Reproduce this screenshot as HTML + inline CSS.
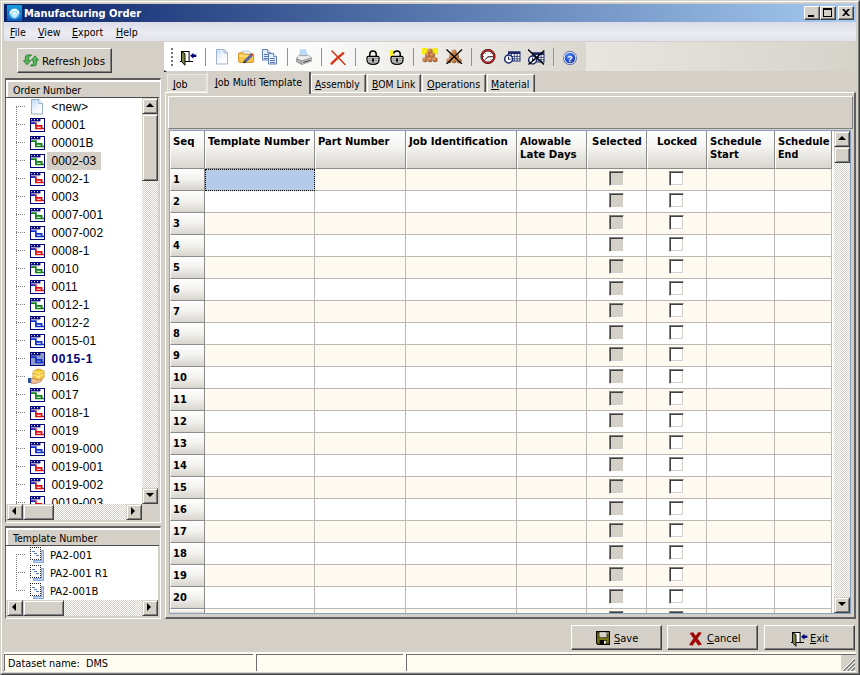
<!DOCTYPE html>
<html><head><meta charset="utf-8"><title>Manufacturing Order</title>
<style>
*{box-sizing:border-box;margin:0;padding:0}
html,body{width:860px;height:675px;overflow:hidden;background:#d4d0c8}
body{position:relative;font-family:"DejaVu Sans Condensed","Liberation Sans",sans-serif;font-size:11px;color:#000}
.a{position:absolute}
.t{position:absolute;white-space:nowrap;line-height:14px;transform-origin:0 0;transform:scaleX(.96)}
.tb{position:absolute;white-space:nowrap;line-height:14px;font-weight:bold}
.tr{position:absolute;white-space:nowrap;line-height:16px;letter-spacing:.12px;font-family:"Liberation Sans",sans-serif;font-size:12px;transform-origin:0 50%;transform:scale(1,1.12)}
u{text-decoration:underline;text-underline-offset:.5px;text-decoration-skip-ink:none;text-decoration-thickness:1px}
#title{left:4px;top:4px;width:852px;height:18px;background:linear-gradient(90deg,#0a246a 0%,#a6caf0 100%)}
#menu{left:4px;top:22px;width:852px;height:19px;background:linear-gradient(180deg,#dcdce9 0%,#ebebf3 55%,#e2e2ec 100%)}
.btn{position:absolute;background:#d4d0c8;border-style:solid;border-width:1px;border-color:#fff #404040 #404040 #fff;box-shadow:inset -1px -1px 0 #808080}
.cap{position:absolute;background:#d4d0c8;border-style:solid;border-width:1px;border-color:#fff #404040 #404040 #fff;box-shadow:inset -1px -1px 0 #808080;top:6px;width:16px;height:14px}
.sb{position:absolute;background:#d4d0c8;border-style:solid;border-width:1px;border-color:#d4d0c8 #404040 #404040 #d4d0c8;box-shadow:inset 1px 1px 0 #fff, inset -1px -1px 0 #808080}
.track{position:absolute;background-color:#fff;background-image:conic-gradient(#d4d0c8 25%,#fff 0 50%,#d4d0c8 0 75%,#fff 0);background-size:2px 2px}
.hd{position:absolute;top:131px;height:38px;background:linear-gradient(180deg,#ffffff 0%,#f4f3f0 45%,#d8d5ce 100%);border-right:1px solid #8c8c8c;border-bottom:1px solid #8c8c8c;border-left:1px solid #fff}
.sq{position:absolute;left:170px;width:35px;height:22px;background:linear-gradient(180deg,#ffffff 0%,#f2f1ed 50%,#d8d5ce 100%);border-right:1px solid #8c8c8c;border-bottom:1px solid #8c8c8c;border-left:1px solid #fff}
.row{position:absolute;left:205px;width:627px;height:22px;border-bottom:1px solid #bcb8b4}
.vl{position:absolute;top:169px;width:1px;height:444px;background:#bcb8b4}
.cb{position:absolute;width:15px;height:15px;border-style:solid;border-width:1px;border-color:#808080 #fff #fff #808080;box-shadow:inset 1px 1px 0 #404040, inset -1px -1px 0 #d4d0c8}
.sp{position:absolute;background:#fffcf0;border-style:solid;border-width:1px;border-color:#808080 #fff #fff #808080;top:654px;height:18px}
.sep{position:absolute;top:48px;width:1px;height:18px;background:#9090a0}
</style></head><body>
<div class="a" style="left:0;top:0;width:860px;height:675px;border-style:solid;border-width:1px;border-color:#d4d0c8 #404040 #404040 #d4d0c8"></div>
<div class="a" style="left:1px;top:1px;width:858px;height:673px;border-style:solid;border-width:1px;border-color:#fff #808080 #808080 #fff"></div>
<div class="a" id="title"></div>
<svg class="a" style="left:7px;top:5px" width="15" height="16" viewBox="0 0 15 16"><defs><linearGradient id="ti" x1="0" y1="0" x2="0" y2="1"><stop offset="0" stop-color="#189ad8"/><stop offset=".5" stop-color="#1a86d6"/><stop offset="1" stop-color="#0e54b4"/></linearGradient><radialGradient id="tg" cx=".5" cy=".5" r=".5"><stop offset="0" stop-color="#e4faff"/><stop offset=".6" stop-color="#8adcfa" stop-opacity=".9"/><stop offset="1" stop-color="#2aa0e6" stop-opacity="0"/></radialGradient></defs><rect width="15" height="16" fill="url(#ti)"/><path d="M1 6 L7.5 15 L14 6" fill="none" stroke="#0c4a9c" stroke-width="1.2" opacity=".55"/><circle cx="7.5" cy="8.8" r="6.4" fill="url(#tg)"/><path d="M3.4 8.8 A4.1 4.1 0 0 1 11.6 8.8" fill="none" stroke="#fff" stroke-width="1.7"/><path d="M4.4 9.4 H10.6 L7.5 13.6 Z" fill="#c4eeff"/><path d="M5.6 9.6 A1.9 1.9 0 0 1 9.4 9.6" fill="none" stroke="#fff" stroke-width=".9"/></svg>
<div class="tb" style="left:24px;top:7px;color:#fff">Manufacturing Order</div>
<div class="cap" style="left:804px"><div class="a" style="left:3px;top:8px;width:6px;height:2px;background:#000"></div></div>
<div class="cap" style="left:820px"><div class="a" style="left:2px;top:1px;width:9px;height:9px;border:1px solid #000;border-top-width:2px"></div></div>
<div class="cap" style="left:838px"><svg class="a" style="left:3px;top:2px" width="8" height="7" viewBox="0 0 8 7"><path d="M0 0h2l2 2 2-2h2l-3 3.5 3 3.5h-2l-2-2-2 2h-2l3-3.5z" fill="#000"/></svg></div>
<div class="a" id="menu"></div>
<div class="t" style="left:10px;top:26px"><u>F</u>ile</div>
<div class="t" style="left:38px;top:26px"><u>V</u>iew</div>
<div class="t" style="left:71.5px;top:26px"><u>E</u>xport</div>
<div class="t" style="left:115.5px;top:26px"><u>H</u>elp</div>
<div class="btn" style="left:17px;top:48px;width:95px;height:25px"></div>
<svg class="a" style="left:23px;top:54px" width="16" height="13" viewBox="0 0 16 13"><g fill="#52b856" stroke="#1f7a2c" stroke-width=".8" stroke-linejoin="round"><path d="M4 10.8 L.4 6.6 H2.4 V3.2 Q2.4 .9 5 .9 H8.6 L7.8 2 H6.6 Q5.7 2 5.7 3.2 V6.6 H7.7 Z"/><path d="M12 1.8 L15.6 6.2 H13.6 V9.6 Q13.6 11.9 11 11.9 H7.4 L8.2 10.8 H9.4 Q10.3 10.8 10.3 9.6 V6.2 H8.3 Z"/></g></svg>
<div class="t" style="left:42.3px;top:55px;transform:scaleX(1.035)">Refresh Jobs</div>
<div class="a" style="left:5px;top:78px;width:156px;height:445px;border-style:solid;border-width:2px 1px 1px 1px;border-color:#5e5e5e #fff #fff #5e5e5e"></div>
<div class="a" style="left:6px;top:80px;width:154px;height:2px;background:#fff"></div>
<div class="a" style="left:6px;top:80px;width:2px;height:17px;background:#fff"></div>
<div class="t" style="left:12.8px;top:84px">Order Number</div>
<div class="a" style="left:6px;top:96.5px;width:153px;height:1.5px;background:#4a4a4a"></div>
<div class="a" style="left:6px;top:98px;width:136px;height:406px;background:#fff;overflow:hidden" id="tree">
<div class="a" style="left:10px;top:9px;width:1px;height:400px;background-image:linear-gradient(#808080 50%,transparent 0);background-size:1px 2px"></div>
<div class="a" style="left:0;top:0px;width:136px;height:18px">
<div class="a" style="left:10px;top:8px;width:10px;height:1px;background-image:linear-gradient(90deg,#808080 50%,transparent 0);background-size:2px 1px"></div>
<svg class="a" style="left:25px;top:1px" width="12" height="15.5" viewBox="0 0 13 16" preserveAspectRatio="none"><defs><linearGradient id="pg" x1="0" y1="0" x2=".6" y2="1"><stop offset="0" stop-color="#b8d8f8"/><stop offset=".6" stop-color="#eef5fd"/><stop offset="1" stop-color="#fff"/></linearGradient></defs><path d="M.5 .5 H8.5 L12.5 4.5 V15.5 H.5 Z" fill="url(#pg)" stroke="#8fa6c4"/><path d="M8.5 .5 V4.5 H12.5" fill="#fff" stroke="#8fa6c4"/></svg>
<div class="tr" style="left:45.5px;top:1px;">&lt;new&gt;</div>
</div>
<div class="a" style="left:0;top:18px;width:136px;height:18px">
<div class="a" style="left:10px;top:8px;width:10px;height:1px;background-image:linear-gradient(90deg,#808080 50%,transparent 0);background-size:2px 1px"></div>
<svg class="a" style="left:24px;top:2px" width="15" height="14" viewBox="0 0 15 14"><rect x=".5" y=".5" width="14" height="13" fill="#fff" stroke="#00007a"/><rect x="1" y="1" width="9.4" height="2.4" fill="#00007a"/><rect x="1.1" y="1.1" width="1.1" height="1.1" fill="#fff"/><rect x="4" y="1.1" width="1.1" height="1.1" fill="#fff"/><rect x="7" y="1.1" width="1.1" height="1.1" fill="#fff"/><path d="M1 5.2 H5.9 V10.5 H14 M5.9 7.8 H11.6 V10.5" fill="none" stroke="#e01010" stroke-width="1.7"/><path d="M1 5.2 H5" fill="none" stroke="#1030d0" stroke-width="1.7"/></svg>
<div class="tr" style="left:45.5px;top:1px;">00001</div>
</div>
<div class="a" style="left:0;top:36px;width:136px;height:18px">
<div class="a" style="left:10px;top:8px;width:10px;height:1px;background-image:linear-gradient(90deg,#808080 50%,transparent 0);background-size:2px 1px"></div>
<svg class="a" style="left:24px;top:2px" width="15" height="14" viewBox="0 0 15 14"><rect x=".5" y=".5" width="14" height="13" fill="#fff" stroke="#00007a"/><rect x="1" y="1" width="9.4" height="2.4" fill="#00007a"/><rect x="1.1" y="1.1" width="1.1" height="1.1" fill="#fff"/><rect x="4" y="1.1" width="1.1" height="1.1" fill="#fff"/><rect x="7" y="1.1" width="1.1" height="1.1" fill="#fff"/><path d="M1 5.2 H5.9 V10.5 H14 M5.9 7.8 H11.6 V10.5" fill="none" stroke="#108018" stroke-width="1.7"/></svg>
<div class="tr" style="left:45.5px;top:1px;">00001B</div>
</div>
<div class="a" style="left:0;top:54px;width:136px;height:18px">
<div class="a" style="left:10px;top:8px;width:10px;height:1px;background-image:linear-gradient(90deg,#808080 50%,transparent 0);background-size:2px 1px"></div>
<svg class="a" style="left:24px;top:2px" width="15" height="14" viewBox="0 0 15 14"><rect x=".5" y=".5" width="14" height="13" fill="#fff" stroke="#00007a"/><rect x="1" y="1" width="9.4" height="2.4" fill="#00007a"/><rect x="1.1" y="1.1" width="1.1" height="1.1" fill="#fff"/><rect x="4" y="1.1" width="1.1" height="1.1" fill="#fff"/><rect x="7" y="1.1" width="1.1" height="1.1" fill="#fff"/><path d="M1 5.2 H5.9 V10.5 H14 M5.9 7.8 H11.6 V10.5" fill="none" stroke="#108018" stroke-width="1.7"/></svg>
<div class="a" style="left:41px;top:0;width:54px;height:18px;background:#d4d0c8"></div>
<div class="tr" style="left:45.5px;top:1px;">0002-03</div>
</div>
<div class="a" style="left:0;top:72px;width:136px;height:18px">
<div class="a" style="left:10px;top:8px;width:10px;height:1px;background-image:linear-gradient(90deg,#808080 50%,transparent 0);background-size:2px 1px"></div>
<svg class="a" style="left:24px;top:2px" width="15" height="14" viewBox="0 0 15 14"><rect x=".5" y=".5" width="14" height="13" fill="#fff" stroke="#00007a"/><rect x="1" y="1" width="9.4" height="2.4" fill="#00007a"/><rect x="1.1" y="1.1" width="1.1" height="1.1" fill="#fff"/><rect x="4" y="1.1" width="1.1" height="1.1" fill="#fff"/><rect x="7" y="1.1" width="1.1" height="1.1" fill="#fff"/><path d="M1 5.2 H5.9 V10.5 H14 M5.9 7.8 H11.6 V10.5" fill="none" stroke="#e01010" stroke-width="1.7"/><path d="M1 5.2 H5" fill="none" stroke="#1030d0" stroke-width="1.7"/></svg>
<div class="tr" style="left:45.5px;top:1px;">0002-1</div>
</div>
<div class="a" style="left:0;top:90px;width:136px;height:18px">
<div class="a" style="left:10px;top:8px;width:10px;height:1px;background-image:linear-gradient(90deg,#808080 50%,transparent 0);background-size:2px 1px"></div>
<svg class="a" style="left:24px;top:2px" width="15" height="14" viewBox="0 0 15 14"><rect x=".5" y=".5" width="14" height="13" fill="#fff" stroke="#00007a"/><rect x="1" y="1" width="9.4" height="2.4" fill="#00007a"/><rect x="1.1" y="1.1" width="1.1" height="1.1" fill="#fff"/><rect x="4" y="1.1" width="1.1" height="1.1" fill="#fff"/><rect x="7" y="1.1" width="1.1" height="1.1" fill="#fff"/><path d="M1 5.2 H5.9 V10.5 H14 M5.9 7.8 H11.6 V10.5" fill="none" stroke="#e01010" stroke-width="1.7"/><path d="M1 5.2 H5" fill="none" stroke="#1030d0" stroke-width="1.7"/></svg>
<div class="tr" style="left:45.5px;top:1px;">0003</div>
</div>
<div class="a" style="left:0;top:108px;width:136px;height:18px">
<div class="a" style="left:10px;top:8px;width:10px;height:1px;background-image:linear-gradient(90deg,#808080 50%,transparent 0);background-size:2px 1px"></div>
<svg class="a" style="left:24px;top:2px" width="15" height="14" viewBox="0 0 15 14"><rect x=".5" y=".5" width="14" height="13" fill="#fff" stroke="#00007a"/><rect x="1" y="1" width="9.4" height="2.4" fill="#00007a"/><rect x="1.1" y="1.1" width="1.1" height="1.1" fill="#fff"/><rect x="4" y="1.1" width="1.1" height="1.1" fill="#fff"/><rect x="7" y="1.1" width="1.1" height="1.1" fill="#fff"/><path d="M1 5.2 H5.9 V10.5 H14 M5.9 7.8 H11.6 V10.5" fill="none" stroke="#108018" stroke-width="1.7"/></svg>
<div class="tr" style="left:45.5px;top:1px;">0007-001</div>
</div>
<div class="a" style="left:0;top:126px;width:136px;height:18px">
<div class="a" style="left:10px;top:8px;width:10px;height:1px;background-image:linear-gradient(90deg,#808080 50%,transparent 0);background-size:2px 1px"></div>
<svg class="a" style="left:24px;top:2px" width="15" height="14" viewBox="0 0 15 14"><rect x=".5" y=".5" width="14" height="13" fill="#fff" stroke="#00007a"/><rect x="1" y="1" width="9.4" height="2.4" fill="#00007a"/><rect x="1.1" y="1.1" width="1.1" height="1.1" fill="#fff"/><rect x="4" y="1.1" width="1.1" height="1.1" fill="#fff"/><rect x="7" y="1.1" width="1.1" height="1.1" fill="#fff"/><path d="M1 5.2 H5.9 V10.5 H14 M5.9 7.8 H11.6 V10.5" fill="none" stroke="#1030d0" stroke-width="1.7"/></svg>
<div class="tr" style="left:45.5px;top:1px;">0007-002</div>
</div>
<div class="a" style="left:0;top:144px;width:136px;height:18px">
<div class="a" style="left:10px;top:8px;width:10px;height:1px;background-image:linear-gradient(90deg,#808080 50%,transparent 0);background-size:2px 1px"></div>
<svg class="a" style="left:24px;top:2px" width="15" height="14" viewBox="0 0 15 14"><rect x=".5" y=".5" width="14" height="13" fill="#fff" stroke="#00007a"/><rect x="1" y="1" width="9.4" height="2.4" fill="#00007a"/><rect x="1.1" y="1.1" width="1.1" height="1.1" fill="#fff"/><rect x="4" y="1.1" width="1.1" height="1.1" fill="#fff"/><rect x="7" y="1.1" width="1.1" height="1.1" fill="#fff"/><path d="M1 5.2 H5.9 V10.5 H14 M5.9 7.8 H11.6 V10.5" fill="none" stroke="#e01010" stroke-width="1.7"/><path d="M1 5.2 H5" fill="none" stroke="#1030d0" stroke-width="1.7"/></svg>
<div class="tr" style="left:45.5px;top:1px;">0008-1</div>
</div>
<div class="a" style="left:0;top:162px;width:136px;height:18px">
<div class="a" style="left:10px;top:8px;width:10px;height:1px;background-image:linear-gradient(90deg,#808080 50%,transparent 0);background-size:2px 1px"></div>
<svg class="a" style="left:24px;top:2px" width="15" height="14" viewBox="0 0 15 14"><rect x=".5" y=".5" width="14" height="13" fill="#fff" stroke="#00007a"/><rect x="1" y="1" width="9.4" height="2.4" fill="#00007a"/><rect x="1.1" y="1.1" width="1.1" height="1.1" fill="#fff"/><rect x="4" y="1.1" width="1.1" height="1.1" fill="#fff"/><rect x="7" y="1.1" width="1.1" height="1.1" fill="#fff"/><path d="M1 5.2 H5.9 V10.5 H14 M5.9 7.8 H11.6 V10.5" fill="none" stroke="#108018" stroke-width="1.7"/></svg>
<div class="tr" style="left:45.5px;top:1px;">0010</div>
</div>
<div class="a" style="left:0;top:180px;width:136px;height:18px">
<div class="a" style="left:10px;top:8px;width:10px;height:1px;background-image:linear-gradient(90deg,#808080 50%,transparent 0);background-size:2px 1px"></div>
<svg class="a" style="left:24px;top:2px" width="15" height="14" viewBox="0 0 15 14"><rect x=".5" y=".5" width="14" height="13" fill="#fff" stroke="#00007a"/><rect x="1" y="1" width="9.4" height="2.4" fill="#00007a"/><rect x="1.1" y="1.1" width="1.1" height="1.1" fill="#fff"/><rect x="4" y="1.1" width="1.1" height="1.1" fill="#fff"/><rect x="7" y="1.1" width="1.1" height="1.1" fill="#fff"/><path d="M1 5.2 H5.9 V10.5 H14 M5.9 7.8 H11.6 V10.5" fill="none" stroke="#e01010" stroke-width="1.7"/><path d="M1 5.2 H5" fill="none" stroke="#1030d0" stroke-width="1.7"/></svg>
<div class="tr" style="left:45.5px;top:1px;">0011</div>
</div>
<div class="a" style="left:0;top:198px;width:136px;height:18px">
<div class="a" style="left:10px;top:8px;width:10px;height:1px;background-image:linear-gradient(90deg,#808080 50%,transparent 0);background-size:2px 1px"></div>
<svg class="a" style="left:24px;top:2px" width="15" height="14" viewBox="0 0 15 14"><rect x=".5" y=".5" width="14" height="13" fill="#fff" stroke="#00007a"/><rect x="1" y="1" width="9.4" height="2.4" fill="#00007a"/><rect x="1.1" y="1.1" width="1.1" height="1.1" fill="#fff"/><rect x="4" y="1.1" width="1.1" height="1.1" fill="#fff"/><rect x="7" y="1.1" width="1.1" height="1.1" fill="#fff"/><path d="M1 5.2 H5.9 V10.5 H14 M5.9 7.8 H11.6 V10.5" fill="none" stroke="#108018" stroke-width="1.7"/></svg>
<div class="tr" style="left:45.5px;top:1px;">0012-1</div>
</div>
<div class="a" style="left:0;top:216px;width:136px;height:18px">
<div class="a" style="left:10px;top:8px;width:10px;height:1px;background-image:linear-gradient(90deg,#808080 50%,transparent 0);background-size:2px 1px"></div>
<svg class="a" style="left:24px;top:2px" width="15" height="14" viewBox="0 0 15 14"><rect x=".5" y=".5" width="14" height="13" fill="#fff" stroke="#00007a"/><rect x="1" y="1" width="9.4" height="2.4" fill="#00007a"/><rect x="1.1" y="1.1" width="1.1" height="1.1" fill="#fff"/><rect x="4" y="1.1" width="1.1" height="1.1" fill="#fff"/><rect x="7" y="1.1" width="1.1" height="1.1" fill="#fff"/><path d="M1 5.2 H5.9 V10.5 H14 M5.9 7.8 H11.6 V10.5" fill="none" stroke="#1030d0" stroke-width="1.7"/></svg>
<div class="tr" style="left:45.5px;top:1px;">0012-2</div>
</div>
<div class="a" style="left:0;top:234px;width:136px;height:18px">
<div class="a" style="left:10px;top:8px;width:10px;height:1px;background-image:linear-gradient(90deg,#808080 50%,transparent 0);background-size:2px 1px"></div>
<svg class="a" style="left:24px;top:2px" width="15" height="14" viewBox="0 0 15 14"><rect x=".5" y=".5" width="14" height="13" fill="#fff" stroke="#00007a"/><rect x="1" y="1" width="9.4" height="2.4" fill="#00007a"/><rect x="1.1" y="1.1" width="1.1" height="1.1" fill="#fff"/><rect x="4" y="1.1" width="1.1" height="1.1" fill="#fff"/><rect x="7" y="1.1" width="1.1" height="1.1" fill="#fff"/><path d="M1 5.2 H5.9 V10.5 H14 M5.9 7.8 H11.6 V10.5" fill="none" stroke="#1030d0" stroke-width="1.7"/></svg>
<div class="tr" style="left:45.5px;top:1px;">0015-01</div>
</div>
<div class="a" style="left:0;top:252px;width:136px;height:18px">
<div class="a" style="left:10px;top:8px;width:10px;height:1px;background-image:linear-gradient(90deg,#808080 50%,transparent 0);background-size:2px 1px"></div>
<svg class="a" style="left:24px;top:2px" width="15" height="14" viewBox="0 0 15 14"><rect x=".5" y=".5" width="14" height="13" fill="#8f9ec8" stroke="#00007a"/><rect x="1" y="1" width="9.4" height="2.4" fill="#00007a"/><rect x="1.1" y="1.1" width="1.1" height="1.1" fill="#fff"/><rect x="4" y="1.1" width="1.1" height="1.1" fill="#fff"/><rect x="7" y="1.1" width="1.1" height="1.1" fill="#fff"/><path d="M1 5.2 H5.9 V10.5 H14 M5.9 7.8 H11.6 V10.5" fill="none" stroke="#1030d0" stroke-width="1.7"/></svg>
<div class="tr" style="left:45.5px;top:1px;font-weight:bold;color:#00007a;letter-spacing:.7px;">0015-1</div>
</div>
<div class="a" style="left:0;top:270px;width:136px;height:18px">
<div class="a" style="left:10px;top:8px;width:10px;height:1px;background-image:linear-gradient(90deg,#808080 50%,transparent 0);background-size:2px 1px"></div>
<svg class="a" style="left:22px;top:0" width="18" height="17" viewBox="0 0 18 17"><path d="M5 3.5 L10 1 L16 2.8 V9.5 L11 12.5 L5 10.5 Z" fill="#f6c83a" stroke="#c08a10" stroke-width=".8"/><path d="M5 3.5 L11 5.3 L16 2.8 M11 5.3 V12.5 M5 7 L11 8.9 L16 6.2" fill="none" stroke="#fff0a0" stroke-width=".9"/><path d="M0 10 H3 V15 H0 Z" fill="#1c4fa8"/><path d="M3 10.6 Q7 9.8 9 12 L13.5 11.4 Q14.6 12.2 13.4 13.2 L8.5 15.3 H3 Z" fill="#f2c49a" stroke="#b0703c" stroke-width=".7"/></svg>
<div class="tr" style="left:45.5px;top:1px;">0016</div>
</div>
<div class="a" style="left:0;top:288px;width:136px;height:18px">
<div class="a" style="left:10px;top:8px;width:10px;height:1px;background-image:linear-gradient(90deg,#808080 50%,transparent 0);background-size:2px 1px"></div>
<svg class="a" style="left:24px;top:2px" width="15" height="14" viewBox="0 0 15 14"><rect x=".5" y=".5" width="14" height="13" fill="#fff" stroke="#00007a"/><rect x="1" y="1" width="9.4" height="2.4" fill="#00007a"/><rect x="1.1" y="1.1" width="1.1" height="1.1" fill="#fff"/><rect x="4" y="1.1" width="1.1" height="1.1" fill="#fff"/><rect x="7" y="1.1" width="1.1" height="1.1" fill="#fff"/><path d="M1 5.2 H5.9 V10.5 H14 M5.9 7.8 H11.6 V10.5" fill="none" stroke="#108018" stroke-width="1.7"/></svg>
<div class="tr" style="left:45.5px;top:1px;">0017</div>
</div>
<div class="a" style="left:0;top:306px;width:136px;height:18px">
<div class="a" style="left:10px;top:8px;width:10px;height:1px;background-image:linear-gradient(90deg,#808080 50%,transparent 0);background-size:2px 1px"></div>
<svg class="a" style="left:24px;top:2px" width="15" height="14" viewBox="0 0 15 14"><rect x=".5" y=".5" width="14" height="13" fill="#fff" stroke="#00007a"/><rect x="1" y="1" width="9.4" height="2.4" fill="#00007a"/><rect x="1.1" y="1.1" width="1.1" height="1.1" fill="#fff"/><rect x="4" y="1.1" width="1.1" height="1.1" fill="#fff"/><rect x="7" y="1.1" width="1.1" height="1.1" fill="#fff"/><path d="M1 5.2 H5.9 V10.5 H14 M5.9 7.8 H11.6 V10.5" fill="none" stroke="#e01010" stroke-width="1.7"/><path d="M1 5.2 H5" fill="none" stroke="#1030d0" stroke-width="1.7"/></svg>
<div class="tr" style="left:45.5px;top:1px;">0018-1</div>
</div>
<div class="a" style="left:0;top:324px;width:136px;height:18px">
<div class="a" style="left:10px;top:8px;width:10px;height:1px;background-image:linear-gradient(90deg,#808080 50%,transparent 0);background-size:2px 1px"></div>
<svg class="a" style="left:24px;top:2px" width="15" height="14" viewBox="0 0 15 14"><rect x=".5" y=".5" width="14" height="13" fill="#fff" stroke="#00007a"/><rect x="1" y="1" width="9.4" height="2.4" fill="#00007a"/><rect x="1.1" y="1.1" width="1.1" height="1.1" fill="#fff"/><rect x="4" y="1.1" width="1.1" height="1.1" fill="#fff"/><rect x="7" y="1.1" width="1.1" height="1.1" fill="#fff"/><path d="M1 5.2 H5.9 V10.5 H14 M5.9 7.8 H11.6 V10.5" fill="none" stroke="#e01010" stroke-width="1.7"/><path d="M1 5.2 H5" fill="none" stroke="#1030d0" stroke-width="1.7"/></svg>
<div class="tr" style="left:45.5px;top:1px;">0019</div>
</div>
<div class="a" style="left:0;top:342px;width:136px;height:18px">
<div class="a" style="left:10px;top:8px;width:10px;height:1px;background-image:linear-gradient(90deg,#808080 50%,transparent 0);background-size:2px 1px"></div>
<svg class="a" style="left:24px;top:2px" width="15" height="14" viewBox="0 0 15 14"><rect x=".5" y=".5" width="14" height="13" fill="#fff" stroke="#00007a"/><rect x="1" y="1" width="9.4" height="2.4" fill="#00007a"/><rect x="1.1" y="1.1" width="1.1" height="1.1" fill="#fff"/><rect x="4" y="1.1" width="1.1" height="1.1" fill="#fff"/><rect x="7" y="1.1" width="1.1" height="1.1" fill="#fff"/><path d="M1 5.2 H5.9 V10.5 H14 M5.9 7.8 H11.6 V10.5" fill="none" stroke="#1030d0" stroke-width="1.7"/></svg>
<div class="tr" style="left:45.5px;top:1px;">0019-000</div>
</div>
<div class="a" style="left:0;top:360px;width:136px;height:18px">
<div class="a" style="left:10px;top:8px;width:10px;height:1px;background-image:linear-gradient(90deg,#808080 50%,transparent 0);background-size:2px 1px"></div>
<svg class="a" style="left:24px;top:2px" width="15" height="14" viewBox="0 0 15 14"><rect x=".5" y=".5" width="14" height="13" fill="#fff" stroke="#00007a"/><rect x="1" y="1" width="9.4" height="2.4" fill="#00007a"/><rect x="1.1" y="1.1" width="1.1" height="1.1" fill="#fff"/><rect x="4" y="1.1" width="1.1" height="1.1" fill="#fff"/><rect x="7" y="1.1" width="1.1" height="1.1" fill="#fff"/><path d="M1 5.2 H5.9 V10.5 H14 M5.9 7.8 H11.6 V10.5" fill="none" stroke="#e01010" stroke-width="1.7"/><path d="M1 5.2 H5" fill="none" stroke="#1030d0" stroke-width="1.7"/></svg>
<div class="tr" style="left:45.5px;top:1px;">0019-001</div>
</div>
<div class="a" style="left:0;top:378px;width:136px;height:18px">
<div class="a" style="left:10px;top:8px;width:10px;height:1px;background-image:linear-gradient(90deg,#808080 50%,transparent 0);background-size:2px 1px"></div>
<svg class="a" style="left:24px;top:2px" width="15" height="14" viewBox="0 0 15 14"><rect x=".5" y=".5" width="14" height="13" fill="#fff" stroke="#00007a"/><rect x="1" y="1" width="9.4" height="2.4" fill="#00007a"/><rect x="1.1" y="1.1" width="1.1" height="1.1" fill="#fff"/><rect x="4" y="1.1" width="1.1" height="1.1" fill="#fff"/><rect x="7" y="1.1" width="1.1" height="1.1" fill="#fff"/><path d="M1 5.2 H5.9 V10.5 H14 M5.9 7.8 H11.6 V10.5" fill="none" stroke="#e01010" stroke-width="1.7"/><path d="M1 5.2 H5" fill="none" stroke="#1030d0" stroke-width="1.7"/></svg>
<div class="tr" style="left:45.5px;top:1px;">0019-002</div>
</div>
<div class="a" style="left:0;top:396px;width:136px;height:18px">
<div class="a" style="left:10px;top:8px;width:10px;height:1px;background-image:linear-gradient(90deg,#808080 50%,transparent 0);background-size:2px 1px"></div>
<svg class="a" style="left:24px;top:2px" width="15" height="14" viewBox="0 0 15 14"><rect x=".5" y=".5" width="14" height="13" fill="#fff" stroke="#00007a"/><rect x="1" y="1" width="9.4" height="2.4" fill="#00007a"/><rect x="1.1" y="1.1" width="1.1" height="1.1" fill="#fff"/><rect x="4" y="1.1" width="1.1" height="1.1" fill="#fff"/><rect x="7" y="1.1" width="1.1" height="1.1" fill="#fff"/><path d="M1 5.2 H5.9 V10.5 H14 M5.9 7.8 H11.6 V10.5" fill="none" stroke="#e01010" stroke-width="1.7"/><path d="M1 5.2 H5" fill="none" stroke="#1030d0" stroke-width="1.7"/></svg>
<div class="tr" style="left:45.5px;top:1px;">0019-003</div>
</div>
</div>
<div class="track" style="left:142px;top:98px;width:16px;height:406px"></div>
<div class="sb" style="left:142px;top:98px;width:16px;height:16px"><svg class="a" style="left:3px;top:4px;width:8px;height:4px" viewBox="0 0 8 4"><path d="M0 4 L4 0 L8 4 Z" fill="#000"/></svg></div>
<div class="sb" style="left:142px;top:488px;width:16px;height:16px"><svg class="a" style="left:3px;top:4px;width:8px;height:4px" viewBox="0 0 8 4"><path d="M0 0 L8 0 L4 4 Z" fill="#000"/></svg></div>
<div class="sb" style="left:142px;top:114px;width:16px;height:67px"></div>
<div class="track" style="left:6px;top:504px;width:136px;height:16px"></div>
<div class="sb" style="left:7px;top:504px;width:16px;height:16px"><svg class="a" style="left:4px;top:2px;width:4px;height:8px" viewBox="0 0 4 8"><path d="M4 0 L4 8 L0 4 Z" fill="#000"/></svg></div>
<div class="sb" style="left:126px;top:504px;width:16px;height:16px"><svg class="a" style="left:4px;top:2px;width:4px;height:8px" viewBox="0 0 4 8"><path d="M0 0 L4 4 L0 8 Z" fill="#000"/></svg></div>
<div class="sb" style="left:23px;top:504px;width:31px;height:16px"></div>
<div class="a" style="left:142px;top:504px;width:16px;height:16px;background:#d4d0c8"></div>
<div class="a" style="left:6px;top:520px;width:154px;height:2px;background:#d4d0c8"></div>
<div class="a" style="left:5px;top:526px;width:156px;height:93px;border-style:solid;border-width:2px 1px 1px 1px;border-color:#5e5e5e #fff #fff #5e5e5e"></div>
<div class="a" style="left:6px;top:528px;width:154px;height:2px;background:#fff"></div>
<div class="a" style="left:6px;top:528px;width:2px;height:17px;background:#fff"></div>
<div class="t" style="left:12.8px;top:532px">Template Number</div>
<div class="a" style="left:6px;top:544.5px;width:153px;height:1.5px;background:#4a4a4a"></div>
<div class="a" style="left:6px;top:546px;width:152px;height:54px;background:#fff;overflow:hidden">
<div class="a" style="left:10px;top:8px;width:1px;height:37px;background-image:linear-gradient(#808080 50%,transparent 0);background-size:1px 2px"></div>
<div class="a" style="left:10px;top:8px;width:10px;height:1px;background-image:linear-gradient(90deg,#808080 50%,transparent 0);background-size:2px 1px"></div>
<div class="a" style="left:0;top:0px;width:152px;height:18px"><svg class="a" style="left:24px;top:1px" width="14" height="16" viewBox="0 0 14 16" shape-rendering="crispEdges"><path d="M11 3 H14 V16 H3 V13 H11 Z" fill="#86a8de"/><path d="M12 4 V14 H4" fill="none" stroke="#c4d6f2"/><rect x="0" y="0" width="11" height="13" fill="#fff"/><rect x="0" y="0" width="1" height="1" fill="#222"/><rect x="0" y="12" width="1" height="1" fill="#222"/><rect x="2" y="0" width="1" height="1" fill="#222"/><rect x="2" y="12" width="1" height="1" fill="#222"/><rect x="4" y="0" width="1" height="1" fill="#222"/><rect x="4" y="12" width="1" height="1" fill="#222"/><rect x="6" y="0" width="1" height="1" fill="#222"/><rect x="6" y="12" width="1" height="1" fill="#222"/><rect x="8" y="0" width="1" height="1" fill="#222"/><rect x="8" y="12" width="1" height="1" fill="#222"/><rect x="10" y="0" width="1" height="1" fill="#222"/><rect x="10" y="12" width="1" height="1" fill="#222"/><rect x="0" y="0" width="1" height="1" fill="#222"/><rect x="10" y="0" width="1" height="1" fill="#222"/><rect x="0" y="2" width="1" height="1" fill="#222"/><rect x="10" y="2" width="1" height="1" fill="#222"/><rect x="0" y="4" width="1" height="1" fill="#222"/><rect x="10" y="4" width="1" height="1" fill="#222"/><rect x="0" y="6" width="1" height="1" fill="#222"/><rect x="10" y="6" width="1" height="1" fill="#222"/><rect x="0" y="8" width="1" height="1" fill="#222"/><rect x="10" y="8" width="1" height="1" fill="#222"/><rect x="0" y="10" width="1" height="1" fill="#222"/><rect x="10" y="10" width="1" height="1" fill="#222"/><rect x="0" y="12" width="1" height="1" fill="#222"/><rect x="10" y="12" width="1" height="1" fill="#222"/><path d="M2 4.5 H5 M4 6.5 H7 M6 8.5 H9" stroke="#5a80c0" fill="none"/></svg><div class="t" style="left:43.5px;top:3px;transform:scaleX(1.04)">PA2-001</div></div>
<div class="a" style="left:10px;top:26px;width:10px;height:1px;background-image:linear-gradient(90deg,#808080 50%,transparent 0);background-size:2px 1px"></div>
<div class="a" style="left:0;top:18px;width:152px;height:18px"><svg class="a" style="left:24px;top:1px" width="14" height="16" viewBox="0 0 14 16" shape-rendering="crispEdges"><path d="M11 3 H14 V16 H3 V13 H11 Z" fill="#86a8de"/><path d="M12 4 V14 H4" fill="none" stroke="#c4d6f2"/><rect x="0" y="0" width="11" height="13" fill="#fff"/><rect x="0" y="0" width="1" height="1" fill="#222"/><rect x="0" y="12" width="1" height="1" fill="#222"/><rect x="2" y="0" width="1" height="1" fill="#222"/><rect x="2" y="12" width="1" height="1" fill="#222"/><rect x="4" y="0" width="1" height="1" fill="#222"/><rect x="4" y="12" width="1" height="1" fill="#222"/><rect x="6" y="0" width="1" height="1" fill="#222"/><rect x="6" y="12" width="1" height="1" fill="#222"/><rect x="8" y="0" width="1" height="1" fill="#222"/><rect x="8" y="12" width="1" height="1" fill="#222"/><rect x="10" y="0" width="1" height="1" fill="#222"/><rect x="10" y="12" width="1" height="1" fill="#222"/><rect x="0" y="0" width="1" height="1" fill="#222"/><rect x="10" y="0" width="1" height="1" fill="#222"/><rect x="0" y="2" width="1" height="1" fill="#222"/><rect x="10" y="2" width="1" height="1" fill="#222"/><rect x="0" y="4" width="1" height="1" fill="#222"/><rect x="10" y="4" width="1" height="1" fill="#222"/><rect x="0" y="6" width="1" height="1" fill="#222"/><rect x="10" y="6" width="1" height="1" fill="#222"/><rect x="0" y="8" width="1" height="1" fill="#222"/><rect x="10" y="8" width="1" height="1" fill="#222"/><rect x="0" y="10" width="1" height="1" fill="#222"/><rect x="10" y="10" width="1" height="1" fill="#222"/><rect x="0" y="12" width="1" height="1" fill="#222"/><rect x="10" y="12" width="1" height="1" fill="#222"/><path d="M2 4.5 H5 M4 6.5 H7 M6 8.5 H9" stroke="#5a80c0" fill="none"/></svg><div class="t" style="left:43.5px;top:3px;transform:scaleX(1.02)">PA2-001 R1</div></div>
<div class="a" style="left:10px;top:44px;width:10px;height:1px;background-image:linear-gradient(90deg,#808080 50%,transparent 0);background-size:2px 1px"></div>
<div class="a" style="left:0;top:36px;width:152px;height:18px"><svg class="a" style="left:24px;top:1px" width="14" height="16" viewBox="0 0 14 16" shape-rendering="crispEdges"><path d="M11 3 H14 V16 H3 V13 H11 Z" fill="#86a8de"/><path d="M12 4 V14 H4" fill="none" stroke="#c4d6f2"/><rect x="0" y="0" width="11" height="13" fill="#fff"/><rect x="0" y="0" width="1" height="1" fill="#222"/><rect x="0" y="12" width="1" height="1" fill="#222"/><rect x="2" y="0" width="1" height="1" fill="#222"/><rect x="2" y="12" width="1" height="1" fill="#222"/><rect x="4" y="0" width="1" height="1" fill="#222"/><rect x="4" y="12" width="1" height="1" fill="#222"/><rect x="6" y="0" width="1" height="1" fill="#222"/><rect x="6" y="12" width="1" height="1" fill="#222"/><rect x="8" y="0" width="1" height="1" fill="#222"/><rect x="8" y="12" width="1" height="1" fill="#222"/><rect x="10" y="0" width="1" height="1" fill="#222"/><rect x="10" y="12" width="1" height="1" fill="#222"/><rect x="0" y="0" width="1" height="1" fill="#222"/><rect x="10" y="0" width="1" height="1" fill="#222"/><rect x="0" y="2" width="1" height="1" fill="#222"/><rect x="10" y="2" width="1" height="1" fill="#222"/><rect x="0" y="4" width="1" height="1" fill="#222"/><rect x="10" y="4" width="1" height="1" fill="#222"/><rect x="0" y="6" width="1" height="1" fill="#222"/><rect x="10" y="6" width="1" height="1" fill="#222"/><rect x="0" y="8" width="1" height="1" fill="#222"/><rect x="10" y="8" width="1" height="1" fill="#222"/><rect x="0" y="10" width="1" height="1" fill="#222"/><rect x="10" y="10" width="1" height="1" fill="#222"/><rect x="0" y="12" width="1" height="1" fill="#222"/><rect x="10" y="12" width="1" height="1" fill="#222"/><path d="M2 4.5 H5 M4 6.5 H7 M6 8.5 H9" stroke="#5a80c0" fill="none"/></svg><div class="t" style="left:43.5px;top:3px;transform:scaleX(1.015)">PA2-001B</div></div>
</div>
<div class="track" style="left:6px;top:600px;width:152px;height:16px"></div>
<div class="sb" style="left:7px;top:600px;width:16px;height:16px"><svg class="a" style="left:4px;top:2px;width:4px;height:8px" viewBox="0 0 4 8"><path d="M4 0 L4 8 L0 4 Z" fill="#000"/></svg></div>
<div class="sb" style="left:142px;top:600px;width:16px;height:16px"><svg class="a" style="left:4px;top:2px;width:4px;height:8px" viewBox="0 0 4 8"><path d="M0 0 L4 4 L0 8 Z" fill="#000"/></svg></div>
<div class="sb" style="left:23px;top:600px;width:41px;height:16px"></div>
<div class="a" style="left:6px;top:616px;width:154px;height:2px;background:#d4d0c8"></div>
<div class="a" style="left:4px;top:652px;width:852px;height:20px;background:#fffcf2"></div>
<div class="a" style="left:4px;top:654px;width:249px;height:17px;border-top:1px solid #6e6e6e;border-left:1px solid #6e6e6e"></div>
<div class="a" style="left:256px;top:654px;width:147px;height:17px;border-top:1px solid #6e6e6e;border-left:1px solid #6e6e6e"></div>
<div class="a" style="left:406px;top:654px;width:450px;height:17px;border-top:1px solid #6e6e6e;border-left:1px solid #6e6e6e"></div>
<div class="a" style="left:841px;top:655px;width:15px;height:16px;background:#d4d0c8"></div>
<div class="t" style="left:8px;top:657px;transform:scaleX(.98)">Dataset name:&nbsp; DMS</div>
<svg class="a" style="left:842px;top:658px" width="13" height="13" viewBox="0 0 13 13"><path d="M13 1.5L1.5 13M13 5.5L5.5 13M13 9.5L9.5 13" stroke="#808080" stroke-width="1.6"/><path d="M13 0L0 13M13 4L4 13M13 8L8 13" stroke="#fff" stroke-width="1"/></svg>
<div class="a" style="left:164px;top:42px;width:692px;height:29px;background:linear-gradient(90deg,#f0efeb 0%,#e8e6e0 61%,#d6d3cb 100%)"></div>
<div class="a" style="left:164px;top:42px;width:422px;height:29px;border-radius:0 3px 0 0;background:linear-gradient(90deg,#ffffff 0%,#fbfbfa 35%,#dad7d0 100%)"></div>
<div class="a" style="left:164px;top:70px;width:3px;height:2px;background:#222;clip-path:polygon(0 0,100% 100%,0 100%)"></div>
<div class="a" style="left:171px;top:48px;width:1.5px;height:18px;background-image:linear-gradient(#777 50%,transparent 0);background-size:2px 4px"></div>
<div class="sep" style="left:205.0px"></div>
<div class="sep" style="left:287.0px"></div>
<div class="sep" style="left:321.0px"></div>
<div class="sep" style="left:354.5px"></div>
<div class="sep" style="left:412.5px"></div>
<div class="sep" style="left:471.0px"></div>
<div class="sep" style="left:553.0px"></div>
<svg class="a" style="left:180px;top:49.5px" width="17" height="16" viewBox="0 0 17 16"><rect x="1.5" y="1.5" width="7.6" height="10" fill="#fff" stroke="#000"/><path d="M0 11.5 H13" stroke="#000"/><path d="M1.5 1.5 L5 3.8 V15.3 L1.5 11.5 Z" fill="#7d8040" stroke="#000" stroke-width=".9"/><path d="M10.2 5.8 L13.4 2.8 V4.5 H16.3 V7.1 H13.4 V8.8 Z" fill="#00007a"/></svg>
<svg class="a" style="left:216px;top:49px" width="12" height="16" viewBox="0 0 12 16"><defs><linearGradient id="np" x1="0" y1="0" x2=".7" y2="1"><stop offset="0" stop-color="#c4dcf6"/><stop offset=".55" stop-color="#f2f7fd"/><stop offset="1" stop-color="#fff"/></linearGradient></defs><path d="M.5 .5 H8 L11.5 4 V15 H.5 Z" fill="url(#np)" stroke="#9fb2cc"/><path d="M8 .5 V4 H11.5 Z" fill="#dfeaf7" stroke="#9fb2cc" stroke-width=".8"/></svg>
<svg class="a" style="left:237.5px;top:49.5px" width="17" height="14" viewBox="0 0 17 14"><path d="M4 1 H11 L13 3 V8 H4 Z" fill="#e8f0fb" stroke="#a8b8d0" stroke-width=".7"/><path d="M.6 4 Q.6 2.8 1.8 2.8 H5 L6.2 4.2 H14.6 Q15.6 4.2 15.6 5.2 V11.4 Q15.6 12.4 14.6 12.4 H1.6 Q.6 12.4 .6 11.4 Z" fill="#f7c64a" stroke="#c98a12" stroke-width=".9"/><path d="M1.2 6 H15" stroke="#fde79a" stroke-width="1.2"/><path d="M5.5 13 L6.3 10.6 L12.6 4.2 L14.4 6 L8 12.3 Z" fill="#5570b8" stroke="#33406c" stroke-width=".6"/><path d="M12.6 4.2 L13.8 3 L15.6 4.8 L14.4 6 Z" fill="#e03020"/><path d="M5.5 13 L6.3 10.6 L8 12.3 Z" fill="#3a2a20"/></svg>
<svg class="a" style="left:262px;top:49px" width="16" height="16" viewBox="0 0 16 16"><path d="M0.5 0.5 H5.5 L8.5 3.5 V11 H0.5 Z" fill="#e4edfa" stroke="#5f7fb8"/><path d="M5.5 0.5 V3.5 H8.5" fill="#fff" stroke="#5f7fb8" stroke-width=".8"/><path d="M2 5.5 H7 M2 7.5 H7 M2 9.5 H7" stroke="#4a6aaa" stroke-width=".9"/><path d="M6.5 4.5 H11.5 L14.5 7.5 V15 H6.5 Z" fill="#e4edfa" stroke="#5f7fb8"/><path d="M11.5 4.5 V7.5 H14.5" fill="#fff" stroke="#5f7fb8" stroke-width=".8"/><path d="M8 9.5 H13 M8 11.5 H13 M8 13.5 H13" stroke="#4a6aaa" stroke-width=".9"/></svg>
<svg class="a" style="left:296px;top:48.7px" width="16" height="16" viewBox="0 0 16 16"><path d="M4.4 .6 Q6 1.6 7.4 .8 Q8.6 .2 9.6 .8 L11.2 7 H3.6 Q4.6 4 4.4 .6 Z" fill="#bcdcf8" stroke="#9cc4ea" stroke-width=".6"/><path d="M2.6 6.6 L3.4 5.8 L5 6.6 H10.4 L12.2 5.8 L15.6 9 L5.6 12 L.4 9.6 Z" fill="#ececec" stroke="#8a8a8a" stroke-width=".7"/><path d="M.4 9.6 L5.6 12 V15.6 L.4 12.8 Z" fill="#b4b4b4" stroke="#7a7a7a" stroke-width=".6"/><path d="M5.6 12 L15.6 9 V12.2 L5.6 15.6 Z" fill="#d0d0d0" stroke="#7a7a7a" stroke-width=".6"/><path d="M7.4 12.9 L14.4 10.7 V11.6 L7.4 13.9 Z" fill="#1a1a1a"/></svg>
<svg class="a" style="left:330px;top:49.5px" width="16" height="16" viewBox="0 0 16 16"><path d="M2 1 L15 14.5" stroke="#d23a18" stroke-width="1.6" stroke-linecap="round"/><path d="M13.2 3.2 Q8 7 1.6 13.6" stroke="#d23a18" stroke-width="2.4" stroke-linecap="round" fill="none"/></svg>
<svg class="a" style="left:365.5px;top:50px" width="14" height="15" viewBox="0 0 14 15"><path d="M3.8 6.4 V4 Q3.8 .9 7 .9 Q10.2 .9 10.2 4 V6.4" fill="none" stroke="#000" stroke-width="1.5"/><path d="M2.2 6.4 H11.8 Q13 6.4 13 7.6 V10 Q13 14.4 7 14.4 Q1 14.4 1 10 V7.6 Q1 6.4 2.2 6.4 Z" fill="#c6c6c6" stroke="#000" stroke-width="1.2"/><path d="M1.8 8.4 H12.2 M1.8 10.4 H12.2 M2.6 12.4 H11.4" stroke="#8a8a8a" stroke-width=".8"/><path d="M6 8.4 H8 V9.6 L7.6 12 H6.4 L6 9.6 Z" fill="#000"/></svg>
<svg class="a" style="left:390px;top:50px" width="14" height="15" viewBox="0 0 14 15"><path d="M0 0 H3.4 L4.6 3 L3 6 H0 Z" fill="#f4f430"/><path d="M3.8 3.6 Q3.8 .9 7 .9 Q10.2 .9 10.2 3.8 V6.4" fill="none" stroke="#000" stroke-width="1.5"/><path d="M2.2 6.4 H11.8 Q13 6.4 13 7.6 V10 Q13 14.4 7 14.4 Q1 14.4 1 10 V7.6 Q1 6.4 2.2 6.4 Z" fill="#c6c6c6" stroke="#000" stroke-width="1.2"/><path d="M1.8 8.4 H12.2 M1.8 10.4 H12.2 M2.6 12.4 H11.4" stroke="#8a8a8a" stroke-width=".8"/><path d="M6 8.4 H8 V9.6 L7.6 12 H6.4 L6 9.6 Z" fill="#000"/></svg>
<svg class="a" style="left:422px;top:48px" width="17" height="15.5" viewBox="0 0 17 15.5"><defs><radialGradient id="bb" cx=".35" cy=".3" r=".8"><stop offset="0" stop-color="#e6a070"/><stop offset=".6" stop-color="#b87440"/><stop offset="1" stop-color="#7a4418"/></radialGradient></defs><path d="M0 0 H5.5 L7 2 L8.5 3.5 L11 0 H16 V6.5 H0 Z" fill="#f6ec18"/><circle cx="8" cy="3.2" r="2.6" fill="url(#bb)"/><circle cx="5.6" cy="7.2" r="2.6" fill="url(#bb)"/><circle cx="10.4" cy="7.2" r="2.6" fill="url(#bb)"/><circle cx="3" cy="11.6" r="2.6" fill="url(#bb)"/><circle cx="8" cy="11.6" r="2.6" fill="url(#bb)"/><circle cx="13" cy="11.6" r="2.6" fill="url(#bb)"/></svg>
<svg class="a" style="left:445.5px;top:48.5px" width="17" height="15.5" viewBox="0 0 17 15.5"><defs><radialGradient id="bb2" cx=".35" cy=".3" r=".8"><stop offset="0" stop-color="#e6a070"/><stop offset=".6" stop-color="#b87440"/><stop offset="1" stop-color="#7a4418"/></radialGradient></defs><circle cx="8" cy="3.2" r="2.6" fill="url(#bb2)"/><circle cx="5.6" cy="7.2" r="2.6" fill="url(#bb2)"/><circle cx="10.4" cy="7.2" r="2.6" fill="url(#bb2)"/><circle cx="3" cy="11.6" r="2.6" fill="url(#bb2)"/><circle cx="8" cy="11.6" r="2.6" fill="url(#bb2)"/><circle cx="13" cy="11.6" r="2.6" fill="url(#bb2)"/><path d="M.5 .5 L16 15 M16 .5 L.5 15" stroke="#000" stroke-width="1.3"/></svg>
<svg class="a" style="left:479.7px;top:48.7px" width="16" height="15" viewBox="0 0 16 15"><circle cx="8" cy="7.5" r="6.4" fill="#fff" stroke="#000" stroke-width="2.2"/><circle cx="8" cy="7.5" r="6.4" fill="none" stroke="#d82020" stroke-width="1.4"/><path d="M8 7.8 H12.4 M8 7.8 L5.4 10" stroke="#000" stroke-width="1"/><g fill="#223"><rect x="7.6" y="2.6" width=".9" height=".9"/><rect x="7.6" y="11.6" width=".9" height=".9"/><rect x="3.1" y="7.1" width=".9" height=".9"/><rect x="12.1" y="7.1" width=".9" height=".9"/><rect x="4.6" y="4.0" width=".9" height=".9"/><rect x="10.6" y="4.0" width=".9" height=".9"/><rect x="4.6" y="10.4" width=".9" height=".9"/><rect x="10.6" y="10.4" width=".9" height=".9"/></g></svg>
<svg class="a" style="left:503.5px;top:51px" width="17" height="12.5" viewBox="0 0 17 12.5"><rect x="4.5" y=".8" width="11.5" height="9.2" fill="#fff" stroke="#1a2a6a" stroke-width="1"/><rect x="4.5" y=".8" width="11.5" height="2.2" fill="#1a2a6a"/><path d="M7.5 3 V10 M10.3 3 V10 M13.1 3 V10 M5 5.4 H16 M5 7.8 H16" stroke="#1a2a6a" stroke-width=".8"/><circle cx="4.6" cy="8" r="3.9" fill="#fff" stroke="#1a2a6a" stroke-width="1.5"/><path d="M4.6 5.6 V8.2 H6.6" fill="none" stroke="#1a2a6a" stroke-width="1.1"/></svg>
<svg class="a" style="left:527.5px;top:49px" width="17" height="16" viewBox="0 0 17 16"><g transform="translate(0,3)"><rect x="4.5" y=".8" width="11.5" height="9.2" fill="#fff" stroke="#1a2a6a" stroke-width="1"/><rect x="4.5" y=".8" width="11.5" height="2.2" fill="#1a2a6a"/><path d="M7.5 3 V10 M10.3 3 V10 M13.1 3 V10 M5 5.4 H16 M5 7.8 H16" stroke="#1a2a6a" stroke-width=".8"/><circle cx="4.6" cy="8" r="3.9" fill="#fff" stroke="#1a2a6a" stroke-width="1.5"/><path d="M4.6 5.6 V8.2 H6.6" fill="none" stroke="#1a2a6a" stroke-width="1.1"/></g><path d="M0 .5 L16 15.5 M16.4 1.5 L.5 15.5" stroke="#000" stroke-width="1.4"/></svg>
<svg class="a" style="left:562.7px;top:51px" width="14" height="14" viewBox="0 0 14 14"><defs><radialGradient id="hg" cx=".4" cy=".3" r=".8"><stop offset="0" stop-color="#5a8cf0"/><stop offset=".5" stop-color="#2858d8"/><stop offset="1" stop-color="#0c2c98"/></radialGradient></defs><circle cx="7" cy="7" r="6.9" fill="#4a5c98"/><circle cx="7" cy="7" r="6.2" fill="#e8f0ff"/><circle cx="7" cy="7" r="5.3" fill="url(#hg)"/><text x="7" y="10.6" font-family="Liberation Sans,sans-serif" font-weight="bold" font-size="9.5" fill="#fff" text-anchor="middle">?</text></svg>
<div class="a" style="left:167px;top:74px;width:40px;height:18px;background:#d9d6cf;border:1px solid #ebe9e4"></div>
<div class="t" style="left:172.5px;top:78px"><u>J</u>ob</div>
<div class="a" style="left:311px;top:74px;width:55px;height:18px;background:#dddad3;border-top:1px solid #fff;border-left:1px solid #fff;border-right:1px solid #484848;box-shadow:inset -1px 0 0 #8c8984"></div>
<div class="t" style="left:315px;top:78px;transform:scaleX(0.935)"><u>A</u>ssembly</div>
<div class="a" style="left:367px;top:74px;width:54px;height:18px;background:#dddad3;border-top:1px solid #fff;border-left:1px solid #fff;border-right:1px solid #484848;box-shadow:inset -1px 0 0 #8c8984"></div>
<div class="t" style="left:371.5px;top:78px;transform:scaleX(0.935)"><u>B</u>OM Link</div>
<div class="a" style="left:422px;top:74px;width:64px;height:18px;background:#dddad3;border-top:1px solid #fff;border-left:1px solid #fff;border-right:1px solid #484848;box-shadow:inset -1px 0 0 #8c8984"></div>
<div class="t" style="left:426.5px;top:78px;transform:scaleX(0.98)"><u>O</u>perations</div>
<div class="a" style="left:487px;top:74px;width:48px;height:18px;background:#dddad3;border-top:1px solid #fff;border-left:1px solid #fff;border-right:1px solid #484848;box-shadow:inset -1px 0 0 #8c8984"></div>
<div class="t" style="left:491.3px;top:78px;transform:scaleX(0.955)"><u>M</u>aterial</div>
<div class="a" style="left:165px;top:92px;width:691px;height:527px;background:#d4d0c8;border-style:solid;border-width:1px 2px 2px 1px;border-color:#fff #606060 #606060 #fff"></div>
<div class="a" style="left:207px;top:72px;width:104px;height:22px;background:#d4d0c8;border-left:1px solid #e8e6e0;border-right:2px solid #5a5a5a"></div>
<div class="t" style="left:214.5px;top:76px"><u>J</u>ob Multi Template</div>
<div class="a" style="left:168px;top:96px;width:685px;height:33px;background:#d4d0c8;border-style:solid;border-width:1px;border-color:#fff #808080 #808080 #fff"></div>
<div class="a" style="left:169px;top:130px;width:682px;height:484px;background:#fff;border:1px solid #8aa2c0"></div>
<div class="row" style="top:169px;background:#fffaf0;height:22px;"></div>
<div class="sq" style="top:169px;height:22px;"></div>
<div class="tb" style="left:173px;top:173px">1</div>
<div class="cb" style="left:609px;top:171px;background:#d4d0c8"></div>
<div class="cb" style="left:669px;top:171px;background:#fff"></div>
<div class="row" style="top:191px;background:#fff;height:22px;"></div>
<div class="sq" style="top:191px;height:22px;"></div>
<div class="tb" style="left:173px;top:195px">2</div>
<div class="cb" style="left:609px;top:193px;background:#d4d0c8"></div>
<div class="cb" style="left:669px;top:193px;background:#fff"></div>
<div class="row" style="top:213px;background:#fffaf0;height:22px;"></div>
<div class="sq" style="top:213px;height:22px;"></div>
<div class="tb" style="left:173px;top:217px">3</div>
<div class="cb" style="left:609px;top:215px;background:#d4d0c8"></div>
<div class="cb" style="left:669px;top:215px;background:#fff"></div>
<div class="row" style="top:235px;background:#fff;height:22px;"></div>
<div class="sq" style="top:235px;height:22px;"></div>
<div class="tb" style="left:173px;top:239px">4</div>
<div class="cb" style="left:609px;top:237px;background:#d4d0c8"></div>
<div class="cb" style="left:669px;top:237px;background:#fff"></div>
<div class="row" style="top:257px;background:#fffaf0;height:22px;"></div>
<div class="sq" style="top:257px;height:22px;"></div>
<div class="tb" style="left:173px;top:261px">5</div>
<div class="cb" style="left:609px;top:259px;background:#d4d0c8"></div>
<div class="cb" style="left:669px;top:259px;background:#fff"></div>
<div class="row" style="top:279px;background:#fff;height:22px;"></div>
<div class="sq" style="top:279px;height:22px;"></div>
<div class="tb" style="left:173px;top:283px">6</div>
<div class="cb" style="left:609px;top:281px;background:#d4d0c8"></div>
<div class="cb" style="left:669px;top:281px;background:#fff"></div>
<div class="row" style="top:301px;background:#fffaf0;height:22px;"></div>
<div class="sq" style="top:301px;height:22px;"></div>
<div class="tb" style="left:173px;top:305px">7</div>
<div class="cb" style="left:609px;top:303px;background:#d4d0c8"></div>
<div class="cb" style="left:669px;top:303px;background:#fff"></div>
<div class="row" style="top:323px;background:#fff;height:22px;"></div>
<div class="sq" style="top:323px;height:22px;"></div>
<div class="tb" style="left:173px;top:327px">8</div>
<div class="cb" style="left:609px;top:325px;background:#d4d0c8"></div>
<div class="cb" style="left:669px;top:325px;background:#fff"></div>
<div class="row" style="top:345px;background:#fffaf0;height:22px;"></div>
<div class="sq" style="top:345px;height:22px;"></div>
<div class="tb" style="left:173px;top:349px">9</div>
<div class="cb" style="left:609px;top:347px;background:#d4d0c8"></div>
<div class="cb" style="left:669px;top:347px;background:#fff"></div>
<div class="row" style="top:367px;background:#fff;height:22px;"></div>
<div class="sq" style="top:367px;height:22px;"></div>
<div class="tb" style="left:173px;top:371px">10</div>
<div class="cb" style="left:609px;top:369px;background:#d4d0c8"></div>
<div class="cb" style="left:669px;top:369px;background:#fff"></div>
<div class="row" style="top:389px;background:#fffaf0;height:22px;"></div>
<div class="sq" style="top:389px;height:22px;"></div>
<div class="tb" style="left:173px;top:393px">11</div>
<div class="cb" style="left:609px;top:391px;background:#d4d0c8"></div>
<div class="cb" style="left:669px;top:391px;background:#fff"></div>
<div class="row" style="top:411px;background:#fff;height:22px;"></div>
<div class="sq" style="top:411px;height:22px;"></div>
<div class="tb" style="left:173px;top:415px">12</div>
<div class="cb" style="left:609px;top:413px;background:#d4d0c8"></div>
<div class="cb" style="left:669px;top:413px;background:#fff"></div>
<div class="row" style="top:433px;background:#fffaf0;height:22px;"></div>
<div class="sq" style="top:433px;height:22px;"></div>
<div class="tb" style="left:173px;top:437px">13</div>
<div class="cb" style="left:609px;top:435px;background:#d4d0c8"></div>
<div class="cb" style="left:669px;top:435px;background:#fff"></div>
<div class="row" style="top:455px;background:#fff;height:22px;"></div>
<div class="sq" style="top:455px;height:22px;"></div>
<div class="tb" style="left:173px;top:459px">14</div>
<div class="cb" style="left:609px;top:457px;background:#d4d0c8"></div>
<div class="cb" style="left:669px;top:457px;background:#fff"></div>
<div class="row" style="top:477px;background:#fffaf0;height:22px;"></div>
<div class="sq" style="top:477px;height:22px;"></div>
<div class="tb" style="left:173px;top:481px">15</div>
<div class="cb" style="left:609px;top:479px;background:#d4d0c8"></div>
<div class="cb" style="left:669px;top:479px;background:#fff"></div>
<div class="row" style="top:499px;background:#fff;height:22px;"></div>
<div class="sq" style="top:499px;height:22px;"></div>
<div class="tb" style="left:173px;top:503px">16</div>
<div class="cb" style="left:609px;top:501px;background:#d4d0c8"></div>
<div class="cb" style="left:669px;top:501px;background:#fff"></div>
<div class="row" style="top:521px;background:#fffaf0;height:22px;"></div>
<div class="sq" style="top:521px;height:22px;"></div>
<div class="tb" style="left:173px;top:525px">17</div>
<div class="cb" style="left:609px;top:523px;background:#d4d0c8"></div>
<div class="cb" style="left:669px;top:523px;background:#fff"></div>
<div class="row" style="top:543px;background:#fff;height:22px;"></div>
<div class="sq" style="top:543px;height:22px;"></div>
<div class="tb" style="left:173px;top:547px">18</div>
<div class="cb" style="left:609px;top:545px;background:#d4d0c8"></div>
<div class="cb" style="left:669px;top:545px;background:#fff"></div>
<div class="row" style="top:565px;background:#fffaf0;height:22px;"></div>
<div class="sq" style="top:565px;height:22px;"></div>
<div class="tb" style="left:173px;top:569px">19</div>
<div class="cb" style="left:609px;top:567px;background:#d4d0c8"></div>
<div class="cb" style="left:669px;top:567px;background:#fff"></div>
<div class="row" style="top:587px;background:#fff;height:22px;"></div>
<div class="sq" style="top:587px;height:22px;"></div>
<div class="tb" style="left:173px;top:591px">20</div>
<div class="cb" style="left:609px;top:589px;background:#d4d0c8"></div>
<div class="cb" style="left:669px;top:589px;background:#fff"></div>
<div class="row" style="top:609px;background:#fffaf0;height:4px;border-bottom:none;"></div>
<div class="sq" style="top:609px;height:4px;border-bottom:none;"></div>
<div class="cb" style="left:609px;top:611px;background:#d4d0c8;height:2px;border-bottom:none"></div>
<div class="cb" style="left:669px;top:611px;background:#fff;height:2px;border-bottom:none"></div>
<div class="vl" style="left:314px"></div>
<div class="vl" style="left:405px"></div>
<div class="vl" style="left:516px"></div>
<div class="vl" style="left:586px"></div>
<div class="vl" style="left:646px"></div>
<div class="vl" style="left:706px"></div>
<div class="vl" style="left:774px"></div>
<div class="vl" style="left:831px"></div>
<div class="a" style="left:205px;top:169px;width:110px;height:22px;background:#b5cbea;border:1px dotted #000"></div>
<div class="hd" style="left:170px;width:35px"></div>
<div class="tb" style="left:173px;top:135px;line-height:13px;transform-origin:0 0;transform:scaleX(1.03)">Seq</div>
<div class="hd" style="left:205px;width:110px"></div>
<div class="tb" style="left:208px;top:135px;line-height:13px;transform-origin:0 0;transform:scaleX(1.032)">Template Number</div>
<div class="hd" style="left:315px;width:91px"></div>
<div class="tb" style="left:318px;top:135px;line-height:13px;transform-origin:0 0;transform:scaleX(1.007)">Part Number</div>
<div class="hd" style="left:406px;width:111px"></div>
<div class="tb" style="left:409px;top:135px;line-height:13px;transform-origin:0 0;transform:scaleX(1.035)">Job Identification</div>
<div class="hd" style="left:517px;width:70px"></div>
<div class="tb" style="left:520px;top:135px;line-height:13px;transform-origin:0 0;transform:scaleX(1.0)">Alowable</div>
<div class="tb" style="left:520px;top:148px;line-height:13px;transform-origin:0 0;transform:scaleX(1.035)">Late Days</div>
<div class="hd" style="left:587px;width:60px"></div>
<div class="tb" style="left:587px;top:135px;width:60px;text-align:center;line-height:13px;transform:scaleX(1.03)">Selected</div>
<div class="hd" style="left:647px;width:60px"></div>
<div class="tb" style="left:647px;top:135px;width:60px;text-align:center;line-height:13px;transform:scaleX(1.03)">Locked</div>
<div class="hd" style="left:707px;width:68px"></div>
<div class="tb" style="left:710px;top:135px;line-height:13px;transform-origin:0 0;transform:scaleX(1.01)">Schedule</div>
<div class="tb" style="left:710px;top:148px;line-height:13px;transform-origin:0 0;transform:scaleX(1.02)">Start</div>
<div class="hd" style="left:775px;width:57px"></div>
<div class="tb" style="left:778px;top:135px;line-height:13px;transform-origin:0 0;transform:scaleX(1.01)">Schedule</div>
<div class="tb" style="left:778px;top:148px;line-height:13px;transform-origin:0 0;transform:scaleX(0.97)">End</div>
<div class="track" style="left:834px;top:131px;width:16px;height:482px"></div>
<div class="sb" style="left:834px;top:131px;width:16px;height:16px"><svg class="a" style="left:3px;top:4px;width:8px;height:4px" viewBox="0 0 8 4"><path d="M0 4 L4 0 L8 4 Z" fill="#000"/></svg></div>
<div class="sb" style="left:834px;top:597px;width:16px;height:16px"><svg class="a" style="left:3px;top:4px;width:8px;height:4px" viewBox="0 0 8 4"><path d="M0 0 L8 0 L4 4 Z" fill="#000"/></svg></div>
<div class="sb" style="left:834px;top:147px;width:16px;height:16px"></div>
<div class="btn" style="left:571px;top:625px;width:91px;height:25px"></div>
<div class="btn" style="left:667px;top:625px;width:91px;height:25px"></div>
<div class="btn" style="left:764px;top:625px;width:91px;height:25px"></div>
<div class="t" style="left:614px;top:632px;transform:none"><u>S</u>ave</div>
<div class="t" style="left:707px;top:632px;transform:none"><u>C</u>ancel</div>
<div class="t" style="left:810px;top:632px;transform:none"><u>E</u>xit</div>
<svg class="a" style="left:596px;top:631px" width="14" height="14" viewBox="0 0 14 14"><path d="M.6 .6 H13.4 V13.4 H2 L.6 12 Z" fill="#7a7a10" stroke="#000" stroke-width="1.1"/><rect x="3" y="1.2" width="8" height="5.6" fill="#d4d0c8" stroke="#000" stroke-width=".6"/><path d="M3.6 1.8 H10.4" stroke="#fff" stroke-width=".8"/><rect x="11.4" y="1.4" width="1" height="1.6" fill="#d4d0c8"/><rect x="3.6" y="9" width="6.8" height="4.2" fill="#000"/><rect x="8" y="9.8" width="1.8" height="3" fill="#fff"/></svg>
<svg class="a" style="left:689.4px;top:631.5px" width="13" height="14" viewBox="0 0 13 14"><path d="M.6 1 L4.2 .2 L6.6 3.8 L9.6 0 L12.8 .8 L8.6 6.6 L13 12.6 L9.2 13.6 L6.4 9.4 L3.4 13.8 L0 12.8 L4.4 6.6 Z" fill="#a00808"/></svg>
<svg class="a" style="left:790.5px;top:630.5px" width="17" height="16" viewBox="0 0 17 16"><rect x="1.5" y="1.5" width="7.6" height="10" fill="#fff" stroke="#000"/><path d="M0 11.5 H13" stroke="#000"/><path d="M1.5 1.5 L5 3.8 V15.3 L1.5 11.5 Z" fill="#7d8040" stroke="#000" stroke-width=".9"/><path d="M10.2 5.8 L13.4 2.8 V4.5 H16.3 V7.1 H13.4 V8.8 Z" fill="#00007a"/></svg>
</body></html>
